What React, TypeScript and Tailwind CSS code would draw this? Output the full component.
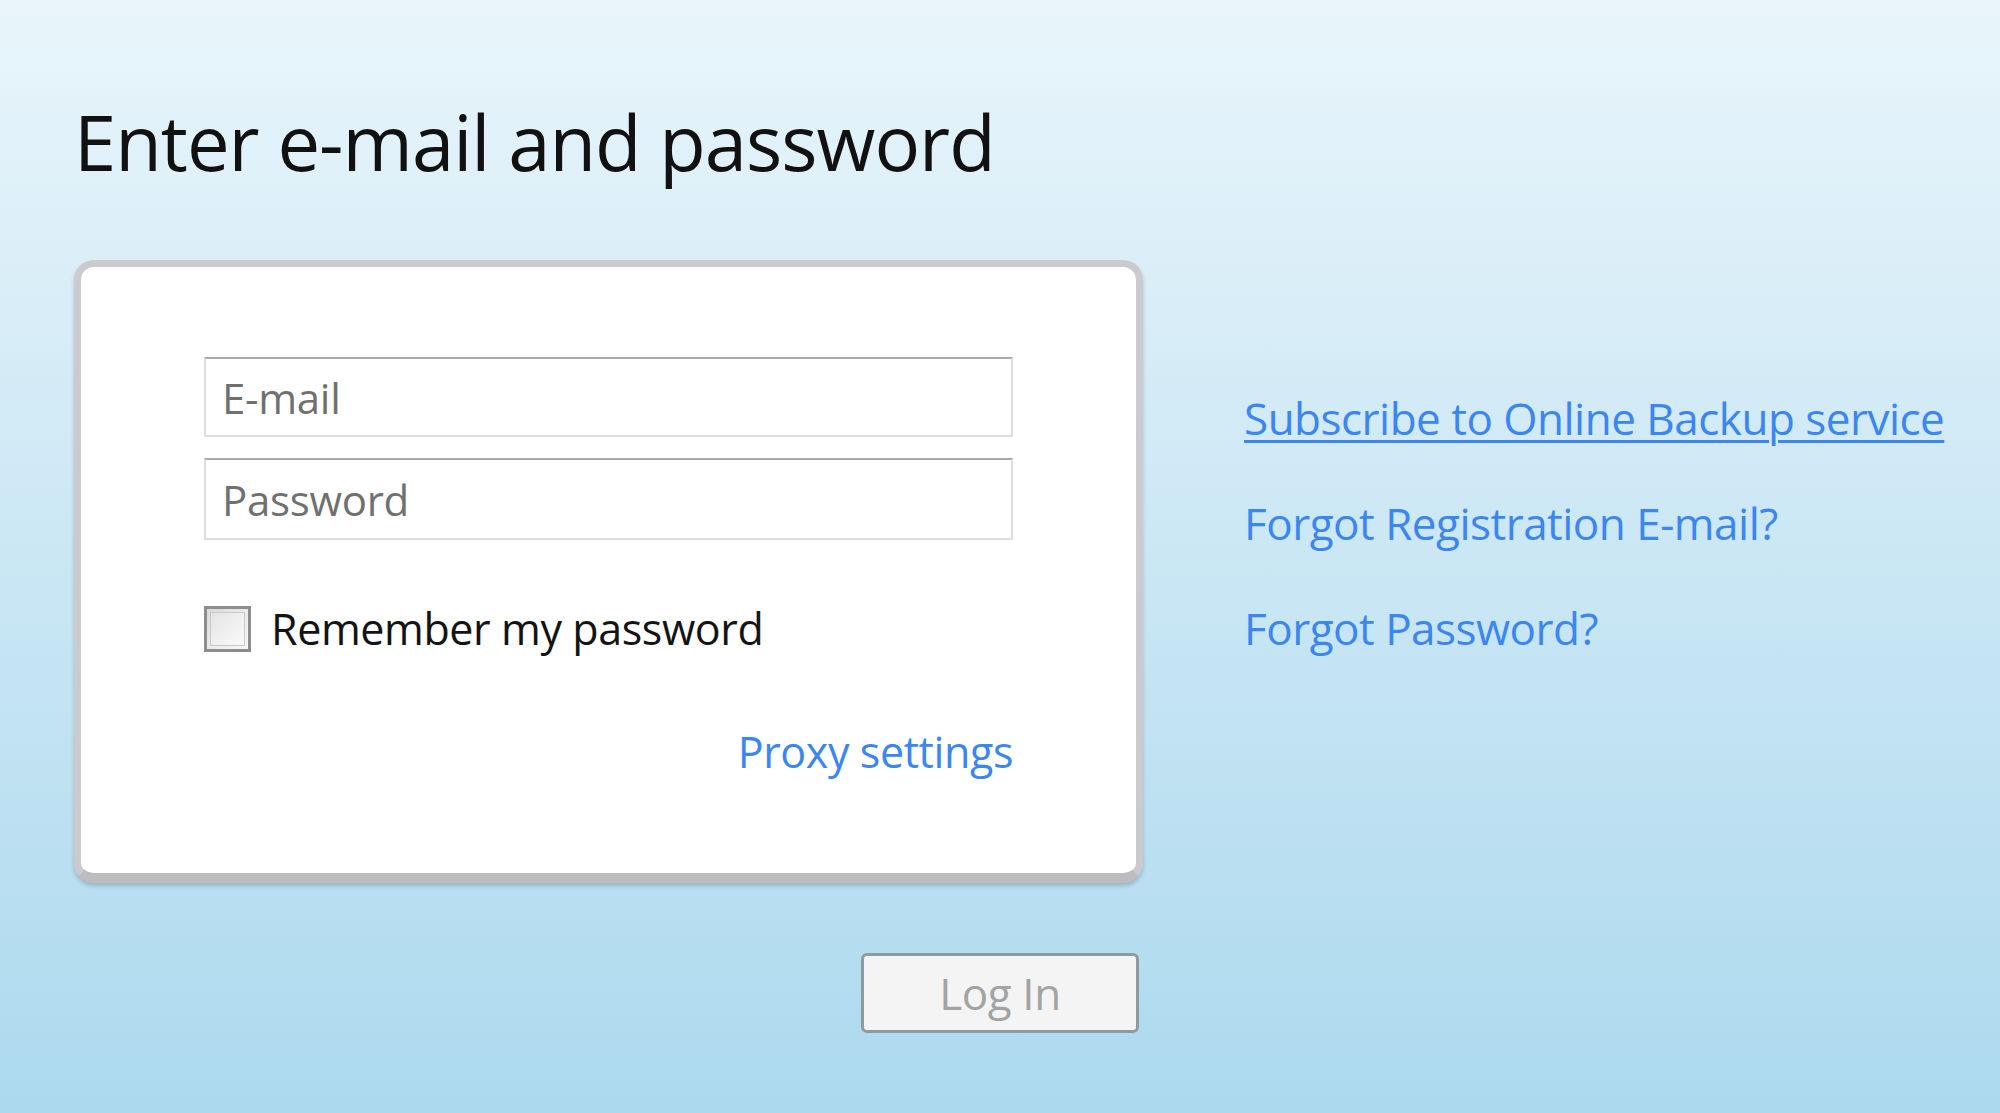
import { useState } from 'react';

export default function App() {
  const [remember, setRemember] = useState(false);

  return (
    <div
      className="w-[2000px] h-[1113px] overflow-hidden bg-gradient-to-b from-[#e9f5fb] to-[#acd9ee] pl-[74px] pt-[92px]"
      style={{ fontFamily: '"Open Sans", "Noto Sans", sans-serif' }}
    >
      <h1 className="text-[76px] leading-[100px] text-[#111] tracking-[-1px]">Enter e-mail and password</h1>

      <div className="flex mt-[68px]">
        <div className="flex flex-col w-[1069px]">
          <div className="h-[623px] rounded-[20px] bg-white border-[7px] border-[#cbcbcf] border-b-[10px] border-b-[#bdbdc0] shadow-[0_3px_4px_rgba(0,0,0,0.18)] pl-[123px] pr-[123px] pt-[90px]">
            <input
              placeholder="E-mail"
              className="block w-[809px] h-[80px] border-2 border-[#dedede] border-t-[#a9a9a9] px-[16px] text-[42px] text-[#222] placeholder:text-[#707070] outline-none tracking-[-0.3px]"
            />
            <input
              type="password"
              placeholder="Password"
              className="block w-[809px] h-[82px] mt-[21px] border-2 border-[#dedede] border-t-[#a9a9a9] px-[16px] text-[42px] text-[#222] placeholder:text-[#707070] outline-none tracking-[-0.3px]"
            />

            <label className="flex items-center gap-[20px] mt-[57px] cursor-pointer">
              <span
                onClick={() => setRemember(!remember)}
                className="w-[47px] h-[46px] border-[3px] border-[#8d8d8d] bg-gradient-to-br from-[#dcdcdc] to-[#f7f7f7] flex items-center justify-center p-[3px]"
              >
                <span className="w-full h-full border border-[#c9c9c9] bg-gradient-to-br from-[#e4e4e4] to-[#fafafa]">
                  {remember && <span className="block text-[28px] leading-[32px] text-center text-[#333]">✓</span>}
                </span>
              </span>
              <span className="text-[43px] text-[#141414] tracking-[-0.4px]">Remember my password</span>
            </label>

            <div className="flex justify-end w-[809px] mt-[58px]">
              <a href="#" className="text-[43px] text-[#3b86f0] tracking-[-0.4px]">Proxy settings</a>
            </div>
          </div>

          <div className="flex justify-end pr-[4px] mt-[70px]">
            <button className="w-[278px] h-[80px] rounded-[6px] border-[3px] border-[#8f9aa0] bg-[#f4f4f4] text-[44px] text-[#a3a3a3] tracking-[-0.4px]">
              Log In
            </button>
          </div>
        </div>

        <div className="flex flex-col pl-[101px] pt-[127px] gap-[42px]">
          <a href="#" className="text-[44px] leading-[63px] text-[#3b86f0] underline underline-offset-[5px] decoration-[3px] tracking-[-0.5px]">
            Subscribe to Online Backup service
          </a>
          <a href="#" className="text-[44px] leading-[63px] text-[#3b86f0] tracking-[-0.5px]">Forgot Registration E-mail?</a>
          <a href="#" className="text-[44px] leading-[63px] text-[#3b86f0] tracking-[-0.5px]">Forgot Password?</a>
        </div>
      </div>
    </div>
  );
}
